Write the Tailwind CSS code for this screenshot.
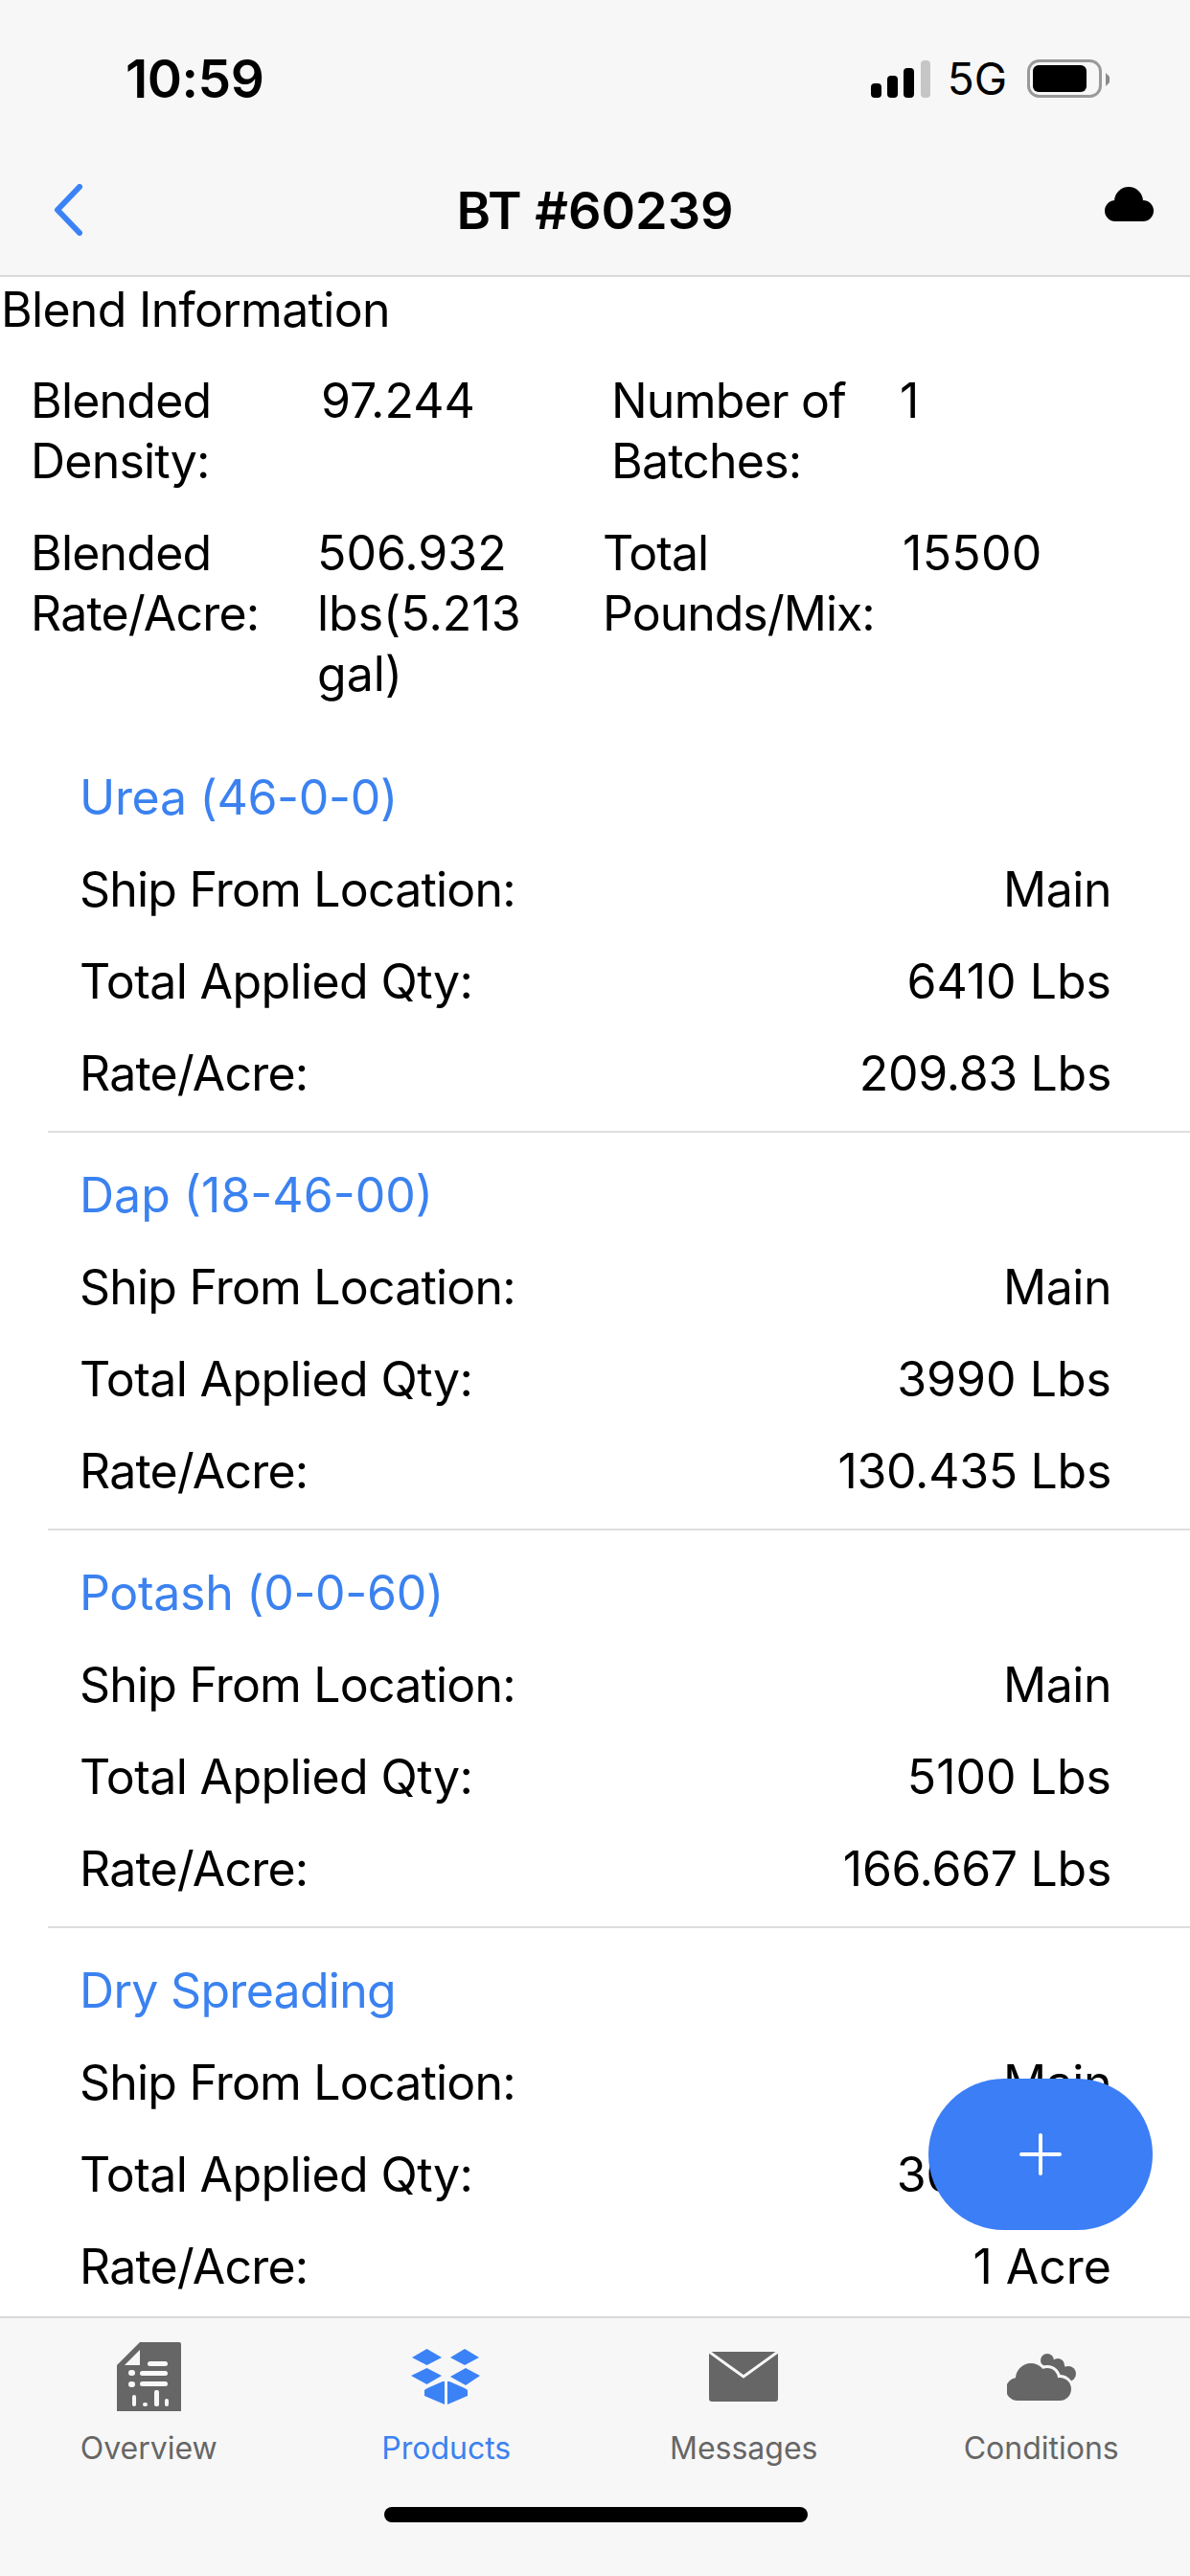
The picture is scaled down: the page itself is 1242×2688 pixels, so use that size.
<!DOCTYPE html>
<html lang="en">
<head>
    <meta charset="UTF-8">
    <title>BT #60239</title>
    <script src="https://cdn.jsdelivr.net/npm/@tailwindcss/browser@4"></script>
</head>
<body class="bg-white font-['Inter',sans-serif] text-black">
<div class="relative w-[1242px] h-[2688px] flex flex-col overflow-hidden">

    <!-- status + nav -->
    <header class="h-[289px] shrink-0 bg-[#f7f7f7] border-b-2 border-[#d9d9d9] flex flex-col">
        <div class="h-[164px] flex items-center justify-between pl-[131px] pr-[84px]">
            <span class="text-[55px] font-semibold tracking-[-0.5px]">10:59</span>
            <div class="flex items-center gap-[21px]">
                <svg class="mr-[-3px]" width="62" height="39" viewBox="0 0 62 39" fill="#000">
                    <rect x="0" y="24" width="11" height="15" rx="4"/>
                    <rect x="17" y="16" width="11" height="23" rx="4"/>
                    <rect x="34" y="8" width="11" height="31" rx="4"/>
                    <rect x="52" y="0" width="10" height="39" rx="4" fill="#c6c6c6"/>
                </svg>
                <span class="text-[46px] leading-none">5G</span>
                <svg width="86" height="40" viewBox="0 0 86 40">
                    <rect x="1.5" y="1.5" width="75" height="37" rx="11" fill="none" stroke="#999" stroke-width="3"/>
                    <rect x="6" y="6" width="56" height="28" rx="6" fill="#000"/>
                    <path d="M82 14 L86 18 V24 L82 28 Z" fill="#8a8a8a"/>
                </svg>
            </div>
        </div>
        <div class="relative flex-1 flex items-center justify-center pb-[12px]">
            <svg class="absolute left-[56px] top-[28px]" width="31" height="54" viewBox="0 0 31 54" fill="none" stroke="#3b82f6" stroke-width="6" stroke-linecap="round" stroke-linejoin="round">
                <path d="M27 3 L4 27 L27 51"/>
            </svg>
            <span class="text-[54px] font-semibold">BT #60239</span>
            <svg class="absolute left-[1153px] top-[31px]" width="51" height="36" viewBox="0 0 51 36" fill="#000">
                <circle cx="11" cy="25" r="11"/>
                <circle cx="25" cy="15" r="15"/>
                <circle cx="40" cy="25" r="11"/>
                <rect x="11" y="20" width="29" height="16"/>
            </svg>
        </div>
    </header>

    <!-- content -->
    <main class="flex-1 overflow-hidden">
        <h2 class="text-[50px] leading-[63px] pl-[1px] pt-[3px] tracking-[-0.7px]">Blend Information</h2>

        <div class="grid grid-cols-[303px_303px_301px_1fr] pl-[32px] text-[50px] leading-[63px] mt-[32px]">
            <div class="tracking-[-0.8px]">Blended<br>Density:</div>
            <div>97.244</div>
            <div class="tracking-[-0.8px]">Number of<br>Batches:</div>
            <div>1</div>
        </div>
        <div class="grid grid-cols-[299px_298px_313px_1fr] pl-[32px] text-[50px] leading-[63px] mt-[33px]">
            <div class="tracking-[-0.8px]">Blended<br>Rate/Acre:</div>
            <div>506.932<br>lbs(5.213<br>gal)</div>
            <div class="tracking-[-1px]">Total<br>Pounds/Mix:</div>
            <div class="tracking-[0.3px]">15500</div>
        </div>

        <section class="ml-[50px] pt-[49px] pb-[12px] border-b-2 border-[#dedede]">
            <h3 class="pl-[33px] text-[50px] leading-[96px] text-[#3b82f0] tracking-[-0.3px]">Urea (46-0-0)</h3>
            <div class="flex justify-between pl-[33px] pr-[82px] text-[50px] leading-[96px]"><span class="tracking-[-0.8px]">Ship From Location:</span><span class="tracking-[-0.5px]">Main</span></div>
            <div class="flex justify-between pl-[33px] pr-[82px] text-[50px] leading-[96px]"><span class="tracking-[-0.6px]">Total Applied Qty:</span><span>6410 Lbs</span></div>
            <div class="flex justify-between pl-[33px] pr-[82px] text-[50px] leading-[96px]"><span class="tracking-[-0.8px]">Rate/Acre:</span><span class="tracking-[-0.3px]">209.83 Lbs</span></div>
        </section>
        <section class="ml-[50px] pt-[17px] pb-[12px] border-b-2 border-[#dedede]">
            <h3 class="pl-[33px] text-[50px] leading-[96px] text-[#3b82f0]">Dap (18-46-00)</h3>
            <div class="flex justify-between pl-[33px] pr-[82px] text-[50px] leading-[96px]"><span class="tracking-[-0.8px]">Ship From Location:</span><span class="tracking-[-0.5px]">Main</span></div>
            <div class="flex justify-between pl-[33px] pr-[82px] text-[50px] leading-[96px]"><span class="tracking-[-0.6px]">Total Applied Qty:</span><span>3990 Lbs</span></div>
            <div class="flex justify-between pl-[33px] pr-[82px] text-[50px] leading-[96px]"><span class="tracking-[-0.8px]">Rate/Acre:</span><span class="tracking-[-0.3px]">130.435 Lbs</span></div>
        </section>
        <section class="ml-[50px] pt-[17px] pb-[12px] border-b-2 border-[#dedede]">
            <h3 class="pl-[33px] text-[50px] leading-[96px] text-[#3b82f0] tracking-[-0.3px]">Potash (0-0-60)</h3>
            <div class="flex justify-between pl-[33px] pr-[82px] text-[50px] leading-[96px]"><span class="tracking-[-0.8px]">Ship From Location:</span><span class="tracking-[-0.5px]">Main</span></div>
            <div class="flex justify-between pl-[33px] pr-[82px] text-[50px] leading-[96px]"><span class="tracking-[-0.6px]">Total Applied Qty:</span><span>5100 Lbs</span></div>
            <div class="flex justify-between pl-[33px] pr-[82px] text-[50px] leading-[96px]"><span class="tracking-[-0.8px]">Rate/Acre:</span><span class="tracking-[-0.3px]">166.667 Lbs</span></div>
        </section>
        <section class="ml-[50px] pt-[17px]">
            <h3 class="pl-[33px] text-[50px] leading-[96px] text-[#3b82f0] tracking-[-0.7px]">Dry Spreading</h3>
            <div class="flex justify-between pl-[33px] pr-[82px] text-[50px] leading-[96px]"><span class="tracking-[-0.8px]">Ship From Location:</span><span class="tracking-[-0.5px]">Main</span></div>
            <div class="flex justify-between pl-[33px] pr-[82px] text-[50px] leading-[96px]"><span class="tracking-[-0.6px]">Total Applied Qty:</span><span>3060 Lbs</span></div>
            <div class="flex justify-between pl-[33px] pr-[82px] text-[50px] leading-[96px]"><span class="tracking-[-0.8px]">Rate/Acre:</span><span>1 Acre</span></div>
        </section>
    </main>

    <!-- tab bar -->
    <nav class="h-[271px] shrink-0 bg-[#f7f7f7] border-t-2 border-[#d9d9d9] relative">
        <div class="grid grid-cols-4 pt-[22px] text-[32px] text-[#666666]">
            <div class="flex flex-col items-center">
                <div class="h-[78px] flex items-center">
                    <svg width="67" height="72" viewBox="0 0 67 72">
                        <path d="M24 0 H65 Q67 0 67 2 V72 H0 V24 Z" fill="#666"/>
                        <g fill="#f7f7f7">
                            <path d="M24 8 V24 H8 Z"/>
                            <rect x="32" y="20" width="21" height="5" rx="2.5"/>
                            <rect x="12" y="29" width="7" height="6" rx="3"/>
                            <rect x="24" y="30" width="29" height="5" rx="2.5"/>
                            <rect x="12" y="41" width="7" height="6" rx="3"/>
                            <rect x="24" y="41" width="29" height="5" rx="2.5"/>
                            <rect x="16" y="55" width="4" height="12" rx="2"/>
                            <rect x="27" y="63" width="5" height="4" rx="2"/>
                            <rect x="39" y="50" width="5" height="17" rx="2"/>
                            <rect x="50" y="59" width="4" height="8" rx="2"/>
                        </g>
                    </svg>
                </div>
                <span class="mt-[16px] leading-[40px]">Overview</span>
            </div>
            <div class="flex flex-col items-center text-[#3b82f0]">
                <div class="h-[78px] flex items-center">
                    <svg width="73" height="60" viewBox="0 0 73 60" fill="#3b82f6">
                        <path d="M1 10 L16.5 1 L32 10 L16.5 18 Z"/>
                        <path d="M41 10 L56 1 L71 10 L56 18 Z"/>
                        <path d="M0 29 L16.5 21 L32 29 L16.5 38 Z"/>
                        <path d="M41 30 L57 21 L72 29 L57 39 Z"/>
                        <path d="M14 44 L17 42 L33 35 L35 35 L35 59 L14 50 Z"/>
                        <path d="M38 35 L40 35 L56 42 L59 44 L59 50 L38 59 Z"/>
                    </svg>
                </div>
                <span class="mt-[16px] leading-[40px]">Products</span>
            </div>
            <div class="flex flex-col items-center">
                <div class="h-[78px] flex items-center">
                    <svg width="72" height="52" viewBox="0 0 72 52">
                        <rect width="72" height="52" rx="3" fill="#666"/>
                        <path d="M0 0 L36 26 L72 0" fill="none" stroke="#f7f7f7" stroke-width="3"/>
                    </svg>
                </div>
                <span class="mt-[16px] leading-[40px]">Messages</span>
            </div>
            <div class="flex flex-col items-center">
                <div class="h-[78px] flex items-center">
                    <svg width="72" height="49" viewBox="0 0 72 49">
                        <g fill="#666">
                            <circle cx="42" cy="7" r="7"/>
                            <circle cx="53" cy="12" r="7"/>
                            <circle cx="64" cy="21" r="8"/>
                            <path d="M36 4 L60 12 L66 30 L40 24 Z"/>
                        </g>
                        <g fill="#f7f7f7" stroke="#f7f7f7" stroke-width="6">
                            <circle cx="11" cy="37" r="12"/>
                            <circle cx="25" cy="26" r="16"/>
                            <circle cx="42" cy="26" r="11"/>
                            <circle cx="55" cy="37" r="12"/>
                        </g>
                        <g fill="#666">
                            <circle cx="11" cy="37" r="12"/>
                            <circle cx="25" cy="26" r="16"/>
                            <circle cx="42" cy="26" r="11"/>
                            <circle cx="55" cy="37" r="12"/>
                            <rect x="11" y="30" width="44" height="19"/>
                        </g>
                    </svg>
                </div>
                <span class="mt-[16px] leading-[40px]">Conditions</span>
            </div>
        </div>
        <div class="absolute left-[401px] top-[197px] w-[442px] h-[16px] rounded-full bg-black"></div>
    </nav>

    <!-- add button -->
    <button class="absolute left-[969px] top-[2169px] w-[234px] h-[158px] rounded-[79px] bg-[#3b7ef6] flex items-center justify-center">
        <svg width="44" height="44" viewBox="0 0 44 44" fill="none" stroke="#fff" stroke-width="4" stroke-linecap="round">
            <path d="M22 2 V42 M2 22 H42"/>
        </svg>
    </button>
</div>
</body>
</html>
